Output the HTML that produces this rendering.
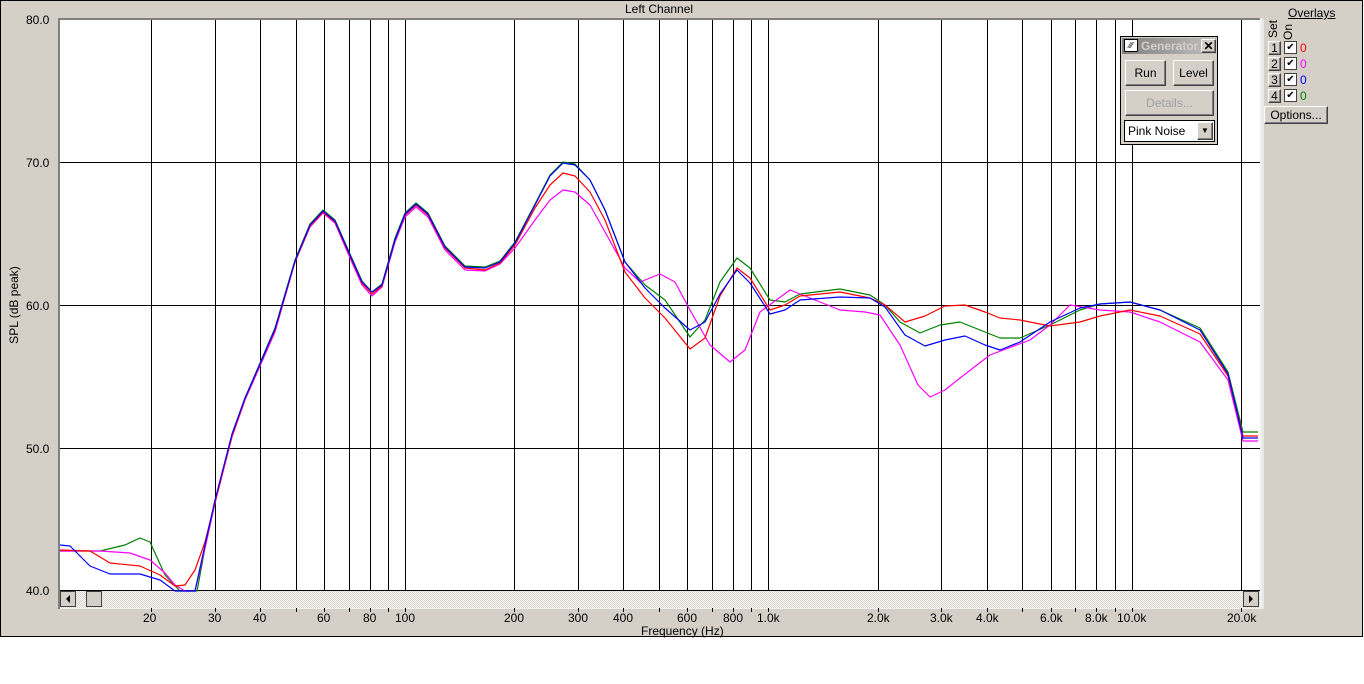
<!DOCTYPE html>
<html><head><meta charset="utf-8"><style>
body{margin:0;background:#fff;width:1364px;height:684px;overflow:hidden;font-family:"Liberation Sans",sans-serif;}
#frame{position:absolute;left:0;top:0;width:1361px;height:635px;background:#d4d0c8;border:1px solid #000;}
.t{position:absolute;font-size:12px;color:#000;line-height:12px;white-space:nowrap}
.btn{position:absolute;background:#d4d0c8;border:1px solid;border-color:#fff #404040 #404040 #fff;box-shadow:inset -1px -1px #808080;font-size:12px;text-align:center;box-sizing:border-box}
</style></head><body>
<div id="frame"></div>
<div class="t" style="left:625px;top:3px">Left Channel</div>
<div class="t" style="left:26px;top:14px">80.0</div>
<div class="t" style="left:26px;top:157px">70.0</div>
<div class="t" style="left:26px;top:300px">60.0</div>
<div class="t" style="left:26px;top:443px">50.0</div>
<div class="t" style="left:26px;top:585px">40.0</div>
<div class="t" style="left:-26px;top:299px;transform:rotate(-90deg);width:80px;text-align:center">SPL (dB peak)</div>
<svg style="position:absolute;left:0;top:0" width="1364" height="684">
<rect x="58" y="18" width="1204" height="591" fill="#f0f0f0"/>
<rect x="58" y="18" width="2" height="591" fill="#808080"/>
<rect x="58" y="18" width="1202" height="2" fill="#808080"/>
<rect x="60" y="20" width="1200" height="571" fill="#fff"/>
<g stroke="#000" stroke-width="1" shape-rendering="crispEdges">
<path d="M151.5 20V591M215.5 20V591M260.5 20V591M296.5 20V591M324.5 20V591M349.5 20V591M370.5 20V591M388.5 20V591M405.5 20V591M514.5 20V591M578.5 20V591M623.5 20V591M659.5 20V591M687.5 20V591M712.5 20V591M733.5 20V591M751.5 20V591M768.5 20V591M878.5 20V591M941.5 20V591M987.5 20V591M1022.5 20V591M1051.5 20V591M1075.5 20V591M1096.5 20V591M1115.5 20V591M1132.5 20V591M1241.5 20V591"/>
<path d="M60 162.5H1260M60 305.5H1260M60 448.5H1260M60 590.5H1260"/>
<path d="M151.5 608V612M215.5 608V612M260.5 608V612M296.5 608V612M324.5 608V612M349.5 608V612M370.5 608V612M388.5 608V612M405.5 608V612M514.5 608V612M578.5 608V612M623.5 608V612M659.5 608V612M687.5 608V612M712.5 608V612M733.5 608V612M751.5 608V612M768.5 608V612M878.5 608V612M941.5 608V612M987.5 608V612M1022.5 608V612M1051.5 608V612M1075.5 608V612M1096.5 608V612M1115.5 608V612M1132.5 608V612M1241.5 608V612"/>
</g>
<defs><pattern id="d" width="2" height="2" patternUnits="userSpaceOnUse"><rect width="2" height="2" fill="#fff"/><rect width="1" height="1" fill="#d4d0c8"/><rect x="1" y="1" width="1" height="1" fill="#d4d0c8"/></pattern></defs>
<rect x="60" y="591" width="1200" height="17" fill="url(#d)"/>
<g fill="#d4d0c8" stroke="#404040"><rect x="60.5" y="591.5" width="15" height="15"/><rect x="86.5" y="591.5" width="15" height="15"/><rect x="1243.5" y="591.5" width="15" height="15"/></g>
<path d="M70 595l-4 4 4 4z M1249 595l4 4-4 4z" fill="#000"/>
<g fill="none" stroke-width="1.2" stroke-linejoin="round">
<polyline stroke="#008000" points="60,551 100,551 125,545 140,538 150,542 165,575 180,591 197,591 205,548 215,503 232,435 245,398 260,363 275,328 295,260 310,224 323,210 335,220 350,254 362,281 372,292 382,284 395,238 405,213 416,203 428,213 445,246 465,266 485,267 500,261 515,242 535,204 550,175 563,162 575,164 590,180 605,210 625,262 645,285 665,300 690,337 705,320 720,282 737,258 750,268 770,300 785,302 800,294 840,289 870,295 885,305 900,322 920,333 940,325 960,322 985,332 1000,338 1020,338 1050,325 1080,310 1100,304 1130,302 1160,310 1200,328 1228,372 1243,432 1258,432"/>
<polyline stroke="#ff00ff" points="60,551 100,551 130,553 150,560 165,573 175,585 185,591 195,591 205,548 215,503 232,437 245,400 260,366 275,332 295,262 310,227 323,213 335,223 350,258 362,285 372,296 382,287 395,242 405,217 416,207 428,217 445,250 465,270 485,271 500,264 515,248 535,220 550,200 563,190 575,192 590,205 605,232 625,268 640,282 660,274 675,282 690,310 710,345 730,362 745,350 760,312 790,290 815,300 840,310 865,312 880,315 900,345 918,385 930,397 945,390 960,378 990,355 1030,340 1050,325 1070,305 1100,310 1130,312 1160,322 1200,342 1228,380 1243,441 1258,441"/>
<polyline stroke="#ff0000" points="60,550 90,551 110,563 140,566 160,575 175,586 185,585 195,570 205,542 215,502 232,436 245,399 260,364 275,330 295,262 310,226 323,212 335,222 350,256 362,283 372,294 382,286 395,240 405,215 416,205 428,215 445,248 465,268 485,270 500,263 515,245 535,208 550,185 563,173 575,176 590,192 605,220 625,272 645,298 665,318 690,349 705,338 720,296 737,268 750,278 770,310 785,305 800,296 840,292 870,298 885,305 905,322 925,316 945,306 965,305 985,312 1000,318 1020,320 1050,326 1080,322 1100,316 1130,310 1160,316 1200,334 1228,376 1243,436 1258,436"/>
<polyline stroke="#0000ff" points="60,545 70,546 90,566 110,574 140,574 160,580 175,591 195,591 205,545 215,500 232,434 245,398 260,364 275,329 295,261 310,225 323,211 335,221 350,255 362,282 372,292 382,285 395,240 405,214 416,204 428,214 445,247 465,267 485,268 500,262 515,243 535,205 550,176 563,163 575,165 590,180 605,210 625,262 645,288 665,308 690,330 705,322 720,294 737,270 750,283 770,314 785,310 800,300 840,297 870,298 885,307 905,335 925,346 945,340 965,336 985,345 1000,350 1020,342 1050,322 1080,308 1100,304 1130,302 1160,310 1200,330 1228,374 1243,438 1258,438"/>
</g>
</svg>
<div class="t" style="left:143px;top:612px">20</div>
<div class="t" style="left:208px;top:612px">30</div>
<div class="t" style="left:253px;top:612px">40</div>
<div class="t" style="left:317px;top:612px">60</div>
<div class="t" style="left:363px;top:612px">80</div>
<div class="t" style="left:395px;top:612px">100</div>
<div class="t" style="left:504px;top:612px">200</div>
<div class="t" style="left:568px;top:612px">300</div>
<div class="t" style="left:613px;top:612px">400</div>
<div class="t" style="left:677px;top:612px">600</div>
<div class="t" style="left:723px;top:612px">800</div>
<div class="t" style="left:757px;top:612px">1.0k</div>
<div class="t" style="left:867px;top:612px">2.0k</div>
<div class="t" style="left:930px;top:612px">3.0k</div>
<div class="t" style="left:976px;top:612px">4.0k</div>
<div class="t" style="left:1040px;top:612px">6.0k</div>
<div class="t" style="left:1085px;top:612px">8.0k</div>
<div class="t" style="left:1117px;top:612px">10.0k</div>
<div class="t" style="left:1227px;top:612px">20.0k</div>
<div class="t" style="left:641px;top:625px">Frequency (Hz)</div>
<!-- generator -->
<div style="position:absolute;left:1120px;top:36px;width:98px;height:109px;background:#d4d0c8;border:1px solid #000;box-sizing:border-box"></div>
<div style="position:absolute;left:1122px;top:38px;width:94px;height:16px;background:linear-gradient(90deg,#808080,#c0c0c0)"></div>
<div style="position:absolute;left:1124px;top:39px;width:14px;height:13px;background:#fff;border:1px solid #000;box-sizing:border-box;font-size:8px;line-height:11px;text-align:center">⁄⁄⁄</div>
<div class="t" style="left:1141px;top:40px;color:#d4d0c8;font-weight:bold">Generator</div>
<div class="btn" style="left:1201px;top:39px;width:15px;height:14px;line-height:12px;font-weight:bold">✕</div>
<div class="btn" style="left:1125px;top:60px;width:41px;height:26px;line-height:24px">Run</div>
<div class="btn" style="left:1173px;top:60px;width:41px;height:26px;line-height:24px">Level</div>
<div class="btn" style="left:1125px;top:90px;width:89px;height:26px;line-height:24px;color:#a0a0a0">Details...</div>
<div style="position:absolute;left:1124px;top:120px;width:91px;height:22px;background:#fff;border:1px solid #000;box-sizing:border-box;font-size:12px;line-height:20px;padding-left:3px">Pink Noise</div>
<div class="btn" style="left:1197px;top:122px;width:16px;height:18px;font-size:8px;line-height:16px">▼</div>
<!-- overlays -->
<div style="position:absolute;left:1262px;top:19px;width:2px;height:590px;background:#e8e8e8"></div>
<div class="t" style="left:1288px;top:7px;text-decoration:underline">Overlays</div>
<div class="t" style="left:1267px;top:28px;transform:rotate(-90deg);transform-origin:left top;top:38px">Set</div>
<div class="t" style="left:1282px;top:40px;transform:rotate(-90deg);transform-origin:left top">On</div>
<div class="btn" style="left:1268px;top:41px;width:13px;height:14px;line-height:12px">1</div>
<div class="btn" style="left:1268px;top:57px;width:13px;height:14px;line-height:12px">2</div>
<div class="btn" style="left:1268px;top:73px;width:13px;height:14px;line-height:12px">3</div>
<div class="btn" style="left:1268px;top:89px;width:13px;height:14px;line-height:12px">4</div>
<div style="position:absolute;left:1284px;top:41px;width:13px;height:13px;background:#fff;border:1px solid #404040;box-sizing:border-box;font-size:10px;line-height:11px;text-align:center">✔</div>
<div style="position:absolute;left:1284px;top:57px;width:13px;height:13px;background:#fff;border:1px solid #404040;box-sizing:border-box;font-size:10px;line-height:11px;text-align:center">✔</div>
<div style="position:absolute;left:1284px;top:73px;width:13px;height:13px;background:#fff;border:1px solid #404040;box-sizing:border-box;font-size:10px;line-height:11px;text-align:center">✔</div>
<div style="position:absolute;left:1284px;top:89px;width:13px;height:13px;background:#fff;border:1px solid #404040;box-sizing:border-box;font-size:10px;line-height:11px;text-align:center">✔</div>
<div class="t" style="left:1300px;top:42px;color:#ff0000">0</div>
<div class="t" style="left:1300px;top:58px;color:#ff00ff">0</div>
<div class="t" style="left:1300px;top:74px;color:#0000ff">0</div>
<div class="t" style="left:1300px;top:90px;color:#008000">0</div>
<div class="btn" style="left:1264px;top:106px;width:64px;height:18px;line-height:16px">Options...</div>
</body></html>
